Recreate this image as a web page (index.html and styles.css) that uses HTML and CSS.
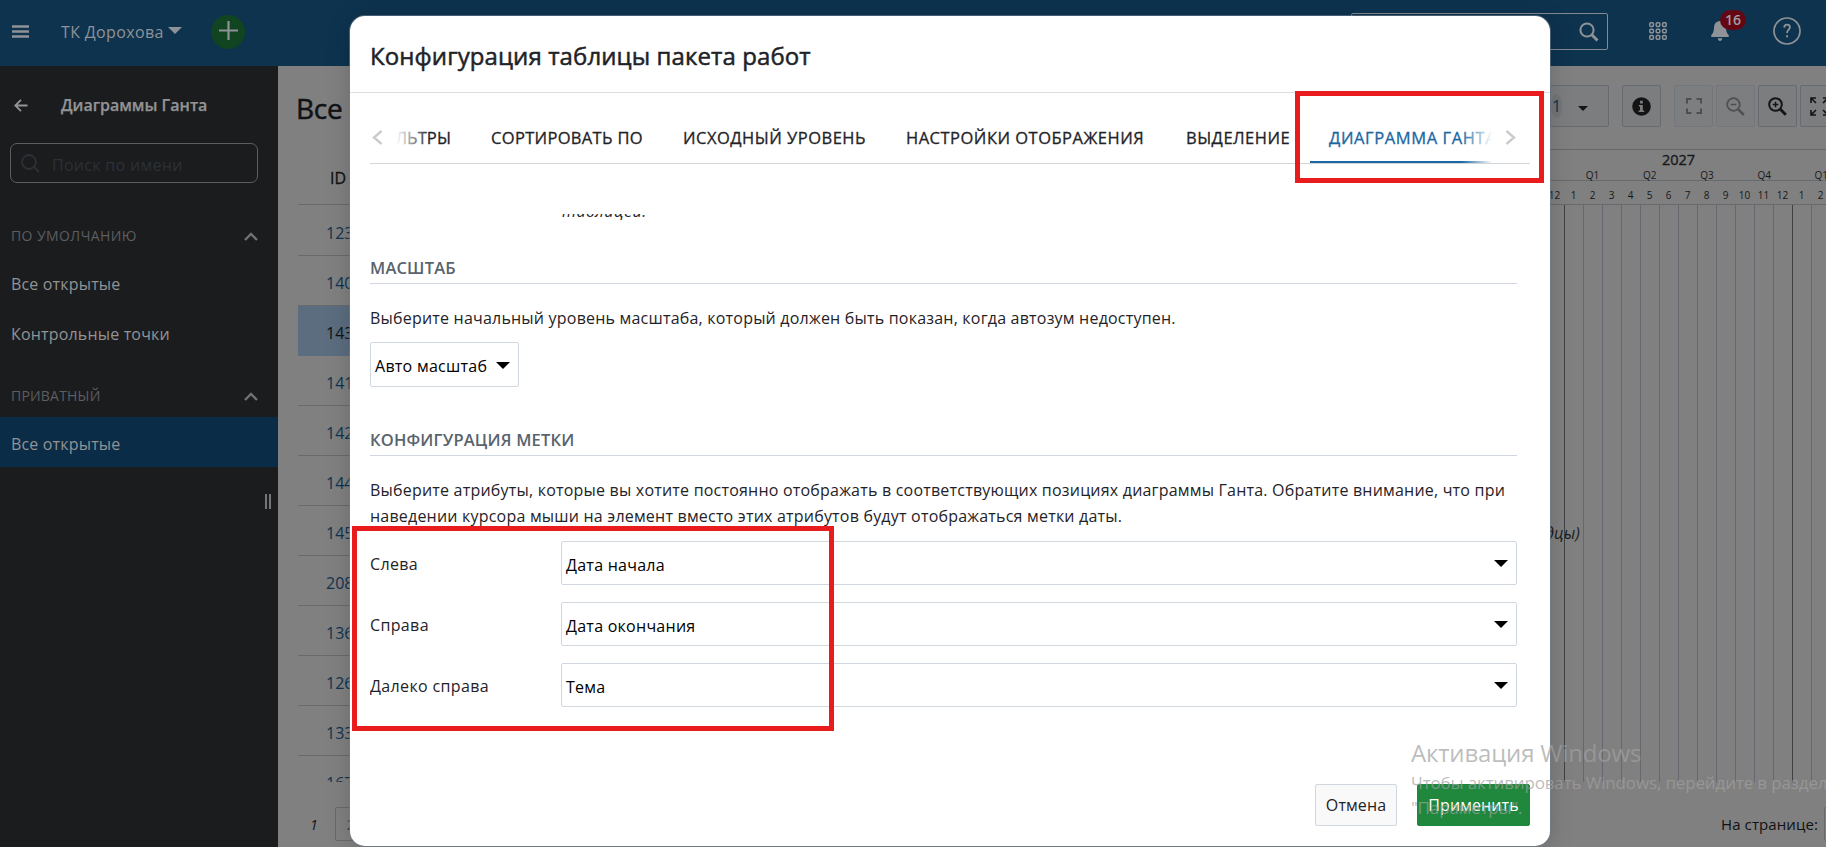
FILE: index.html
```html
<!DOCTYPE html>
<html lang="ru">
<head>
<meta charset="utf-8">
<title>Конфигурация таблицы пакета работ</title>
<link rel="stylesheet" href="styles.css">
</head>
<body>
<div class="app">
  <header class="topbar">
    <svg class="burger" width="17" height="13" viewBox="0 0 17 13"><path d="M0 1.5h17M0 6.500h17M0 11.500h17" stroke="currentColor" stroke-width="2.400"/></svg>
    <span class="project">ТК Дорохова</span>
    <svg class="project-caret" width="14" height="7" viewBox="0 0 14 7"><path d="M0 0h14L7 7z" fill="currentColor"/></svg>
    <span class="add"><svg width="19" height="19" viewBox="0 0 19 19"><path d="M9.500 0v19M0 9.500h19" stroke="currentColor" stroke-width="2.200"/></svg></span>
    <div class="global-search">
      <svg width="20" height="20" viewBox="0 0 20 20" fill="none" stroke="currentColor"><circle cx="8" cy="8" r="6.600" stroke-width="2"/><path d="M12.800 12.800l5.700 5.700" stroke-width="3"/></svg>
    </div>
    <svg class="modules" width="18" height="18" viewBox="0 0 18 18" fill="none" stroke="currentColor" stroke-width="1.500"><rect x=".8" y=".8" width="3.600" height="3.600" rx="1"/><rect x="7.200" y=".8" width="3.600" height="3.600" rx="1"/><rect x="13.600" y=".8" width="3.600" height="3.600" rx="1"/><rect x=".8" y="7.200" width="3.600" height="3.600" rx="1"/><rect x="7.200" y="7.200" width="3.600" height="3.600" rx="1"/><rect x="13.600" y="7.200" width="3.600" height="3.600" rx="1"/><rect x=".8" y="13.600" width="3.600" height="3.600" rx="1"/><rect x="7.200" y="13.600" width="3.600" height="3.600" rx="1"/><rect x="13.600" y="13.600" width="3.600" height="3.600" rx="1"/></svg>
    <div class="bell">
      <svg width="18" height="20" viewBox="0 0 18 20" fill="currentColor"><path d="M9 0c-4 .3-6 3.200-6 6.500C3 11 1.500 12.500.3 14.200c-.5.9 0 1.800.9 1.800h15.600c.9 0 1.400-.9.900-1.800C16.500 12.500 15 11 15 6.500 15 3.200 13 .3 9 0zM6.700 17.300h4.600C11 19 10.200 20 9 20s-2-1-2.300-2.700z"/></svg>
      <span class="count">16</span>
    </div>
    <svg class="help" width="28" height="28" viewBox="0 0 28 28" fill="none" stroke="currentColor"><circle cx="14" cy="14" r="13" stroke-width="1.700"/><path d="M11.200 10.600c.1-1.900 1.200-2.900 2.900-2.900 1.600 0 2.800 1 2.800 2.500 0 2.300-2.800 2.700-2.800 5.700" stroke-width="1.800"/><path d="M13.100 19.300h1.900" stroke-width="1.900"/></svg>
  </header>

  <div class="body">
    <aside class="sidebar">
      <div class="side-title">
        <svg width="14" height="13" viewBox="0 0 14 13" fill="none" stroke="currentColor" stroke-width="1.800"><path d="M13.500 6.500H1.500M7 .8L1.300 6.500 7 12.200"/></svg>
        <span>Диаграммы Ганта</span>
      </div>
      <div class="side-search">
        <svg width="19" height="19" viewBox="0 0 19 19" fill="none" stroke="currentColor" stroke-width="1.800"><circle cx="8" cy="8" r="7"/><path d="M13 13l5 5"/></svg>
        <span>Поиск по имени</span>
      </div>
      <div class="section">ПО УМОЛЧАНИЮ<svg width="14" height="9" viewBox="0 0 14 9"><path d="M1 8l6-6 6 6" fill="none" stroke="currentColor" stroke-width="2.400"/></svg></div>
      <div class="item">Все открытые</div>
      <div class="item">Контрольные точки</div>
      <div class="section private">ПРИВАТНЫЙ<svg width="14" height="9" viewBox="0 0 14 9"><path d="M1 8l6-6 6 6" fill="none" stroke="currentColor" stroke-width="2.400"/></svg></div>
      <div class="item active">Все открытые</div>
      <div class="resizer"></div>
    </aside>

    <main class="table-side">
      <h1>Все</h1>
      <div class="rows">
        <div class="head">ID</div>
        <div class="row first">123</div>
        <div class="row">140</div>
        <div class="row selected">143</div>
        <div class="row">141</div>
        <div class="row">142</div>
        <div class="row">144</div>
        <div class="row">145</div>
        <div class="row">208</div>
        <div class="row">136</div>
        <div class="row">126</div>
        <div class="row">133</div>
        <div class="row">167</div>
      </div>
      <div class="pages"><i>1</i><span>2</span></div>
    </main>

    <section class="gantt-side">
      <div class="tools">
        <div class="tool wide"><span class="badge">1</span><svg width="10" height="5" viewBox="0 0 10 5"><path d="M0 0h10L5 5z" fill="currentColor"/></svg></div>
        <div class="tool info"><svg width="19" height="19" viewBox="0 0 19 19"><circle cx="9.500" cy="9.500" r="9.300" fill="currentColor"/><path d="M6.800 8h4v5.500h1.400V15H6.600v-1.500H8v-4H6.800zM8 3.800h2.800v2.700H8z" fill="#7a7c7e"/></svg></div>
        <div class="tool faded"><svg width="16" height="16" viewBox="0 0 16 16" fill="none" stroke="currentColor" stroke-width="2"><path d="M1 5.500V1h4.500M10.500 1H15v4.500M15 10.500V15h-4.500M5.500 15H1v-4.500"/></svg></div>
        <div class="tool faded"><svg width="19" height="19" viewBox="0 0 19 19" fill="none" stroke="currentColor"><circle cx="7.500" cy="7.500" r="6.300" stroke-width="1.800"/><path d="M4.700 7.500h5.600" stroke-width="1.500"/><path d="M12.300 12.300l5.500 5.500" stroke-width="2.600"/></svg></div>
        <div class="tool"><svg width="19" height="19" viewBox="0 0 19 19" fill="none" stroke="currentColor"><circle cx="7.500" cy="7.500" r="6.300" stroke-width="2"/><path d="M4.700 7.500h5.600M7.500 4.700v5.600" stroke-width="1.500"/><path d="M12.300 12.300l5.500 5.500" stroke-width="2.800"/></svg></div>
        <div class="tool"><svg width="19" height="19" viewBox="0 0 19 19" fill="none" stroke="currentColor" stroke-width="1.600"><path d="M1 6V1h5M1 1l5 5M13 1h5v5M18 1l-5 5M1 13v5h5M1 18l5-5M18 13v5h-5M18 18l-5-5"/></svg></div>
      </div>
      <div class="timeline">
        <div class="year">2027</div>
        <div class="quarters"><span>Q1</span><span>Q2</span><span>Q3</span><span>Q4</span><span>Q1</span></div>
        <div class="months"><span>12</span><span>1</span><span>2</span><span>3</span><span>4</span><span>5</span><span>6</span><span>7</span><span>8</span><span>9</span><span>10</span><span>11</span><span>12</span><span>1</span><span>2</span></div>
        <div class="grid">
          <b class="dark"></b><b></b><b></b><b></b><b></b><b></b><b></b><b></b><b></b><b></b><b></b><b></b><b class="dark"></b><b></b><b></b>
          <em class="task-label">дцы)</em>
        </div>
      </div>
      <div class="per-page"><span>На странице:</span><div class="per-box"></div></div>
    </section>
  </div>
</div>

<div class="modal">
  <div class="modal-head">Конфигурация таблицы пакета работ</div>
  <div class="tabs">
    <svg class="tab-arrow" width="11" height="15" viewBox="0 0 11 15"><path d="M9.500 1L2 7.500 9.500 14" fill="none" stroke="currentColor" stroke-width="2.400"/></svg>
    <div class="tab-strip">
      <span class="tab t-filter">ЛЬТРЫ</span>
      <span class="tab t-sort">СОРТИРОВАТЬ ПО</span>
      <span class="tab t-base">ИСХОДНЫЙ УРОВЕНЬ</span>
      <span class="tab t-view">НАСТРОЙКИ ОТОБРАЖЕНИЯ</span>
      <span class="tab t-mark">ВЫДЕЛЕНИЕ</span>
      <span class="tab t-gantt">ДИАГРАММА ГАНТА</span>
    </div>
    <svg class="tab-arrow right" width="11" height="15" viewBox="0 0 11 15"><path d="M1.500 1L9 7.500 1.500 14" fill="none" stroke="currentColor" stroke-width="2.400"/></svg>
  </div>
  <div class="content">
    <div class="note">таблицей.</div>
    <h2>МАСШТАБ</h2>
    <p>Выберите начальный уровень масштаба, который должен быть показан, когда автозум недоступен.</p>
    <div class="select auto"><span>Авто масштаб</span><svg width="14" height="7" viewBox="0 0 14 7"><path d="M0 0h14L7 7z"/></svg></div>
    <h2 class="second">КОНФИГУРАЦИЯ МЕТКИ</h2>
    <p>Выберите атрибуты, которые вы хотите постоянно отображать в соответствующих позициях диаграммы Ганта. Обратите внимание, что при<br>наведении курсора мыши на элемент вместо этих атрибутов будут отображаться метки даты.</p>
    <div class="fields">
      <label>Слева</label><div class="select"><span>Дата начала</span><svg width="14" height="7" viewBox="0 0 14 7"><path d="M0 0h14L7 7z"/></svg></div>
      <label>Справа</label><div class="select"><span>Дата окончания</span><svg width="14" height="7" viewBox="0 0 14 7"><path d="M0 0h14L7 7z"/></svg></div>
      <label>Далеко справа</label><div class="select"><span>Тема</span><svg width="14" height="7" viewBox="0 0 14 7"><path d="M0 0h14L7 7z"/></svg></div>
    </div>
  </div>
  <div class="actions"><div class="btn">Отмена</div><div class="btn primary">Применить</div></div>
</div>

<div class="mark mark-tab"></div>
<div class="mark mark-fields"></div>
<div class="watermark">
  <div class="wm-title">Активация Windows</div>
  <div class="wm-text">Чтобы активировать Windows, перейдите в раздел</div>
  <div class="wm-text">"Параметры".</div>
</div>
</body>
</html>
```
FILE: styles.css
```css
* { box-sizing: border-box; }
body { margin: 0; width: 1826px; height: 847px; overflow: hidden; position: relative; font: 16px/24px "Open Sans", "Noto Sans", sans-serif; color: #1f2328; background: #808080; }
svg { display: block; flex: none; }
.app { height: 847px; display: flex; flex-direction: column; overflow: hidden; }

/* top bar */
.topbar { height: 66px; flex: none; background: #0e334f; color: #8f9296; display: flex; align-items: center; padding-left: 12px; }
.burger { margin-top: -4px; }
.project { margin-left: 32px; width: 103px; letter-spacing: .36px; margin-top: -3px; white-space: nowrap; }
.project-caret { margin-left: 4px; margin-top: -5px; }
.add { width: 34px; height: 34px; margin-left: 29px; margin-top: -3px; border-radius: 50%; background: #114521; display: flex; align-items: center; justify-content: center; }
.add svg { margin-top: -2px; }
.global-search { margin-left: auto; width: 257px; height: 37px; margin-top: -3px; border: 1px solid #848a90; border-radius: 2px; display: flex; align-items: center; justify-content: flex-end; padding-right: 8px; }
.modules { margin: -4px 0 0 41px; }
.bell { position: relative; margin: -4px 0 0 44px; }
.count { position: absolute; left: 9px; top: -11px; width: 26px; height: 20px; border-radius: 10px; background: #640714; color: #a09ea0; font: 600 14px/20px "Open Sans", sans-serif; text-align: center; }
.help { margin: -4px 25px 0 44px; }
.body { flex: 1; display: flex; min-height: 0; }

/* sidebar */
.sidebar { width: 278px; flex: none; background: #1b1c1e; color: #929395; position: relative; padding-top: 23px; }
.side-title { display: flex; align-items: center; height: 32px; padding-left: 14px; font-weight: 600; white-space: nowrap; -webkit-text-stroke: .25px currentColor; }
.side-title span { margin-left: 33px; }
.side-search { margin: 22px 0 32px 10px; width: 248px; height: 40px; border: 1px solid #5b5d60; border-radius: 7px; display: flex; align-items: center; padding-left: 10px; color: #2b3137; }
.side-search span { margin: 3px 0 0 12px; letter-spacing: .3px; }
.section { height: 42px; line-height: 42px; padding: 0 20px 0 11px; display: flex; align-items: center; justify-content: space-between; font-size: 14px; letter-spacing: .42px; color: #5c5e60; }
.section svg { color: #707274; }
.private { margin-top: 18px; letter-spacing: .2px; }
.item { height: 50px; line-height: 50px; padding: 2px 0 0 11px; letter-spacing: .17px; }
.active { background: #0b2c46; }
.resizer { position: absolute; left: 265px; top: 428px; width: 6px; height: 15px; border: solid #747576; border-width: 0 2px; }

/* work package table */
.table-side { width: 80px; flex: none; padding-left: 20px; overflow: hidden; }
h1 { margin: 20px 0 0 -2px; font-size: 28px; font-weight: 500; line-height: 44px; letter-spacing: -.3px; color: #101214; -webkit-text-stroke: .5px currentColor; }
.rows { margin-top: 24px; height: 628px; overflow: hidden; white-space: nowrap; }
.head { height: 51px; border-bottom: 1px solid #686b6e; padding: 12px 0 0 32px; font-weight: 500; color: #101214; -webkit-text-stroke: .3px currentColor; }
.row { height: 50px; line-height: 50px; padding: 2px 0 0 28px; color: #0f3350; border-bottom: 1px solid #686b6e; }
.first { height: 51px; padding-top: 3px; }
.selected { background: #5b6d7f; color: #101214; border-color: #5b6d7f; }
.pages { display: flex; align-items: center; margin-top: 25px; padding-left: 12px; font-size: 14px; color: #101214; }
.pages span { margin-left: 17px; width: 40px; height: 34px; line-height: 34px; border: 1px solid #686b6e; border-radius: 2px; padding-left: 11px; color: #4a3b33; }
.pages i { margin-top: 2px; width: 8px; }

/* gantt pane */
.gantt-side { flex: 1; min-width: 0; padding-left: 1192px; overflow: hidden; display: flex; flex-direction: column; }
.tools { display: flex; gap: 3px; margin-top: 19px; height: 42px; flex: none; color: #141414; }
.tool { width: 39px; height: 42px; flex: none; border: 1px solid #666b71; border-radius: 2px; background: #7b7d7f; display: flex; align-items: center; justify-content: center; }
.wide { width: 59px; justify-content: flex-end; padding-right: 20px; margin-right: 10px; }
.wide svg { margin-top: 4px; }
.badge { width: 24px; height: 24px; line-height: 24px; text-align: center; border-radius: 50%; background: #747576; margin-right: 16px; color: #0f3350; }
.info { margin-right: 10px; }
.faded { color: #4d4f50; border-color: #73767a; background: #7d7e7f; }
.timeline { margin-top: 22px; height: 633px; flex: none; border-top: 1px solid #65676a; color: #16181a; }
.year { height: 20px; padding-left: 112px; font: 500 14.500px/20px "Open Sans", sans-serif; -webkit-text-stroke: .3px currentColor; }
.quarters { height: 11px; display: flex; padding-left: 14px; border-bottom: 1px solid #666a6f; font-size: 10px; line-height: 11px; }
.quarters span { width: 57.200px; flex: none; text-align: center; }
.months { height: 24px; display: flex; margin-left: -5px; border-bottom: 1px solid #666a6f; font-size: 10px; line-height: 29px; }
.months span { width: 19px; flex: none; text-align: center; }
.grid { position: relative; height: 577px; display: flex; padding-left: 14px; }
.grid b { width: 19px; flex: none; border-left: 1px solid #65696f; }
.grid .dark { border-left-color: #3f4145; }
.task-label { position: absolute; left: -5px; top: 316px; color: #1b1c1e; font-size: 16px; letter-spacing: .1px; }
.per-page { display: flex; align-items: center; margin-top: 25px; padding-left: 171px; font-size: 15px; white-space: nowrap; color: #101214; }
.per-page span { letter-spacing: .1px; width: 97px; }
.per-box { margin-left: 6px; width: 40px; height: 34px; border: 1px solid #686b6e; border-radius: 2px; flex: none; }

/* dialog over the page */
.modal { position: absolute; left: 350px; top: 16px; width: 1200px; height: 830px; border-radius: 15px; background: #fff; box-shadow: 0 0 0 1px rgba(110, 125, 140, .6), 0 3px 24px rgba(0, 0, 0, .18); display: flex; flex-direction: column; }
.modal-head { height: 77px; padding: 4px 20px 0; line-height: 72px; border-bottom: 1px solid #dcdfe2; font-size: 24px; font-weight: 500; letter-spacing: .1px; -webkit-text-stroke: .5px currentColor; }
.tabs { display: flex; align-items: center; height: 50px; margin: 21px 20px 0; border-bottom: 1px solid #d2d6da; color: #c9cbcd; position: relative; }
.tab-arrow { margin: -2px 7px 0 2px; }
.tab-arrow.right { margin: -2px 0 0 9px; }
.tab-strip { width: 1106px; height: 49px; display: flex; overflow: hidden; position: relative; color: #1f2328; }
.tab-strip::before { content: ""; position: absolute; left: 0; width: 40px; height: 49px; background: linear-gradient(90deg, #fff 15%, rgba(255, 255, 255, 0)); }
.tab-strip::after { content: ""; position: absolute; right: 0; width: 35px; height: 49px; background: linear-gradient(90deg, rgba(255, 255, 255, 0), #fff 90%); }
.tab { flex: none; font-size: 16.500px; font-weight: 500; line-height: 48px; white-space: nowrap; -webkit-text-stroke: .3px currentColor; }
.t-filter { width: 101px; padding-right: 40px; display: flex; justify-content: flex-end; letter-spacing: .1px; }
.t-sort { width: 192px; letter-spacing: .33px; }
.t-base { width: 223px; letter-spacing: .5px; }
.t-view { width: 280px; letter-spacing: .5px; }
.t-mark { width: 124px; letter-spacing: .48px; }
.t-gantt { width: 206px; padding-left: 19px; letter-spacing: .6px; color: #1a67a3; border-bottom: 2px solid #1a67a3; }
.content { margin: 50px 33px 0 20px; height: 525px; overflow: hidden; flex: none; }
.note { margin: -15px 0 33px 192px; font-style: italic; letter-spacing: .5px; }
h2 { margin: 0; height: 28px; border-bottom: 1px solid #d0d7de; font-size: 16.500px; font-weight: 600; line-height: 23px; letter-spacing: .18px; color: #59636e; }
.second { margin-top: 41px; }
p { margin: 21px 0 10px; line-height: 26px; letter-spacing: .205px; white-space: nowrap; }
.select { height: 44px; border: 1px solid #d0d7de; border-radius: 2px; display: flex; align-items: center; justify-content: space-between; padding: 3px 8px 0 4px; color: #000; letter-spacing: .26px; }
.select svg { margin-top: -2px; }
.auto { width: 149px; height: 45px; margin-top: 11px; }
.fields { display: grid; grid-template-columns: 191px 1fr; row-gap: 17px; margin-top: 12px; align-items: center; letter-spacing: .36px; }
.fields label { padding-top: 1px; }
.actions { position: relative; display: flex; justify-content: flex-end; gap: 20px; margin: 45px 20px 0 0; height: 42px; }
.btn { width: 82px; height: 42px; line-height: 41px; text-align: center; border: 1px solid #d0d7de; border-radius: 2px; background: #f9f9f9; letter-spacing: .1px; }
.primary { width: 113px; background: #1f883d; border-color: #1f883d; color: #fff; letter-spacing: .1px; }

/* annotations */
.mark { position: absolute; border: 5px solid #e81c1c; }
.mark-tab { left: 1295px; top: 91px; width: 249px; height: 92px; }
.mark-fields { left: 352px; top: 526px; width: 482px; height: 205px; }
.watermark { position: absolute; left: 1411px; top: 736px; width: 415px; color: rgba(160, 160, 160, .7); white-space: nowrap; overflow: hidden; }
.wm-title { font-size: 24px; line-height: 34px; letter-spacing: -.17px; }
.wm-text { font-size: 17px; line-height: 25px; letter-spacing: -.15px; }
```
